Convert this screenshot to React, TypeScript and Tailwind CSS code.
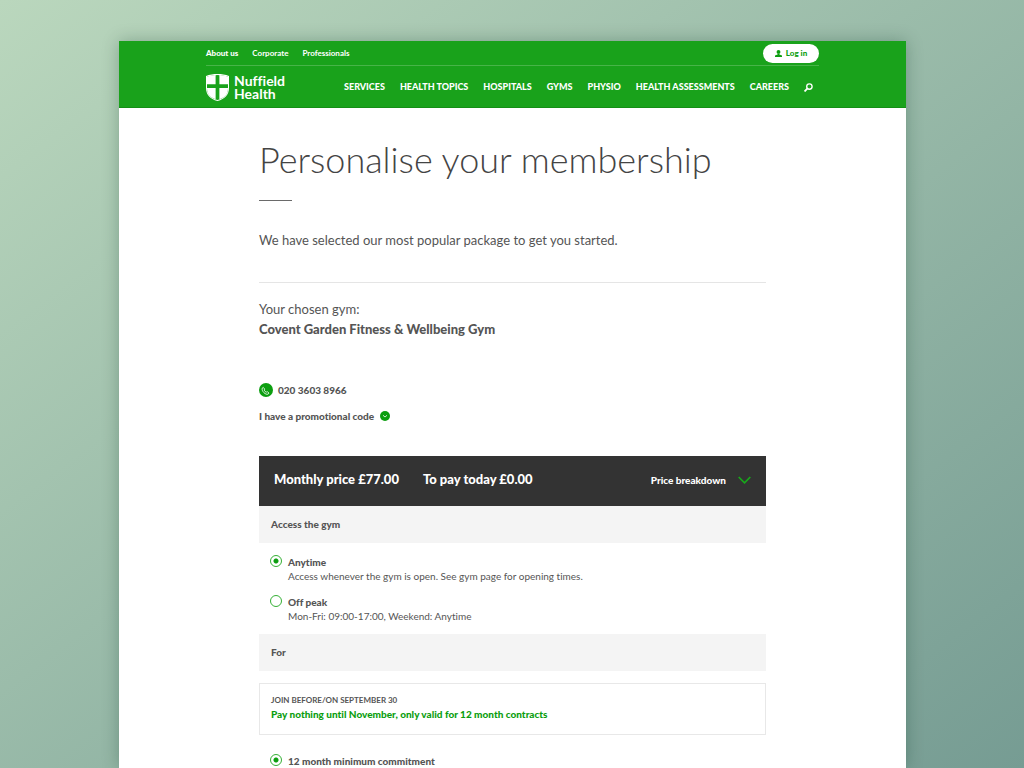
import React from "react";

const topLinks = ["Corporate", "Professionals"];
const navLinks = ["SERVICES", "HEALTH TOPICS", "HOSPITALS", "GYMS", "PHYSIO", "HEALTH ASSESSMENTS", "CAREERS"];

function Shield() {
  return (
    <svg viewBox="0 0 23 27" className="h-[27px] w-[23px]" fill="#fff" aria-hidden="true">
      <path d="M1 2.700C4 1.600 7 1.100 9.600 1V10.200H1Z" />
      <path d="M13.400 1C16 1.100 19 1.600 22 2.700v7.500h-8.600Z" />
      <path d="M1 14h8.600v11.300C4 23.300 1 20 1 14Z" />
      <path d="M22 14h-8.600v11.300C19 23.300 22 20 22 14Z" />
      <path d="M0 2V14C0 20.500 4 25 11.500 27 19 25 23 20.500 23 14V2C16-.6 7-.6 0 2ZM1 2.700C8 .5 15 .5 22 2.700V14c0 6-3.500 10-10.500 12C4.500 24 1 20 1 14Z" fillRule="evenodd" />
    </svg>
  );
}

function Radio({ id, name, title, detail, checked }: { id: string; name: string; title: string; detail?: string; checked?: boolean }) {
  return (
    <div className="flex gap-1.5">
      <input
        id={id}
        type="radio"
        name={name}
        defaultChecked={checked}
        className="m-0 size-3 shrink-0 appearance-none rounded-full border border-[#35b035] bg-white checked:bg-[radial-gradient(circle,#0c9e10_0_2px,transparent_3px)]"
      />
      <label htmlFor={id} className="block text-[10px] leading-[14px]">
        <span className="block font-black">{title}</span>
        {detail && <span className="block">{detail}</span>}
      </label>
    </div>
  );
}

export default function App() {
  return (
    <div className="min-h-screen bg-linear-to-br from-[#bad7bd] to-[#769c93] pt-[41px] pr-[118px] pl-[119px] font-['Lato',sans-serif] text-[#555] [font-variant-ligatures:none]">
      <div className="min-h-[calc(100vh-41px)] bg-white shadow-[0_0_16px_rgba(0,50,30,0.28)]">
        <header className="border-b border-[#148f16] bg-[#19a21b] px-[87px] text-white">
          <div className="flex h-[25px] items-center justify-between border-b border-white/20 text-[8px]">
            <nav aria-label="Site" className="flex gap-3.5 font-bold">
              <a href="#about" className="font-black">About us</a>
              {topLinks.map((l) => (
                <a key={l} href={"#" + l}>{l}</a>
              ))}
            </nav>
            <a href="#login" className="flex h-[19px] w-14 items-center justify-center gap-1 rounded-full bg-white font-black text-[#0c9e10]">
              <svg viewBox="0 0 8 8" className="size-[7px]" fill="currentColor" aria-hidden="true">
                <circle cx="4" cy="2.200" r="2.200" />
                <path d="M3 4h2v1l3 1.200V8H0V6.200L3 5Z" />
              </svg>
              Log in
            </a>
          </div>
          <div className="flex h-[41px] items-center justify-between pt-px">
            <a href="#home" className="flex items-center gap-[5px]">
              <Shield />
              <span className="text-[14px] leading-[13px] font-bold">
                <span className="block">Nuffield</span>
                <span className="block">Health</span>
              </span>
            </a>
            <nav aria-label="Main" className="flex items-center gap-[15px] pr-1.5 text-[9px] font-black">
              {navLinks.map((l) => (
                <a key={l} href={"#" + l} className="whitespace-nowrap">{l}</a>
              ))}
              <button type="button" aria-label="Search">
                <svg viewBox="0 0 10 10" className="size-[9px]" fill="none" stroke="currentColor" strokeWidth="1.500" aria-hidden="true">
                  <circle cx="6" cy="3.900" r="3" />
                  <path d="M3.900 6 .6 9.400" strokeWidth="2" />
                </svg>
              </button>
            </nav>
          </div>
        </header>

        <main className="px-[140px] pt-6">
          <h1 className="text-[36px] leading-[54px] font-light whitespace-nowrap text-[#444]">Personalise your membership</h1>
          <div className="mt-3.5 h-px w-[33px] bg-[#6a6a6a]" />
          <p className="mt-[29px] text-[13px] leading-5">We have selected our most popular package to get you started.</p>

          <section className="mt-8 border-t border-[#e5e5e5] pt-4">
            <p className="text-[13px] leading-5">Your chosen gym:</p>
            <h2 className="text-[13px] leading-5 font-black">Covent Garden Fitness &amp; Wellbeing Gym</h2>
            <a href="tel:02036038966" className="mt-11 flex items-center gap-[5px] text-[10px] leading-[14px] font-black">
              <svg viewBox="0 0 14 14" className="size-3.5" aria-hidden="true">
                <circle cx="7" cy="7" r="7" fill="#0c9e10" />
                <path d="M3.200 5.200 4.300 4.400 5.700 6.100 5.100 7C5.500 8 6.300 8.800 7.200 9.200L8.200 8.600 10 10 9.200 11.100C6.600 12.200 2.400 8.200 3.200 5.200Z" fill="none" stroke="#fff" strokeWidth=".8" strokeLinejoin="round" />
              </svg>
              020 3603 8966
            </a>
            <button type="button" className="mt-3 flex items-center gap-1.5 text-[10px] leading-[14px] font-black">
              I have a promotional code
              <svg viewBox="0 0 10 10" className="size-2.5" aria-hidden="true">
                <circle cx="5" cy="5" r="5" fill="#0c9e10" />
                <path d="m3 4.300 2 1.700 2-1.700" fill="none" stroke="#fff" strokeWidth=".8" />
              </svg>
            </button>
          </section>

          <section className="mt-[33px]">
            <div className="flex h-[50px] items-center bg-[#333] px-[15px] pb-0.5 font-black text-white">
              <div className="flex gap-6 text-[13px]">
                <span>Monthly price £77.00</span>
                <span>To pay today £0.00</span>
              </div>
              <button type="button" className="ml-auto flex items-center gap-3 text-[10px]">
                Price breakdown
                <svg viewBox="0 0 13 8" className="h-2 w-[13px]" fill="none" stroke="#18a81b" strokeWidth="1.700" aria-hidden="true">
                  <path d="m.7 1 5.800 5.800L12.300 1" />
                </svg>
              </button>
            </div>
            <h3 className="bg-[#f4f4f4] px-3 py-[11px] text-[10px] leading-[15px] font-black">Access the gym</h3>
            <div className="flex flex-col gap-3 px-[11px] pt-3 pb-[11px]">
              <Radio id="anytime" name="access" title="Anytime" detail="Access whenever the gym is open. See gym page for opening times." checked />
              <Radio id="offpeak" name="access" title="Off peak" detail="Mon-Fri: 09:00-17:00, Weekend: Anytime" />
            </div>
            <h3 className="bg-[#f4f4f4] px-3 py-[11px] text-[10px] leading-[15px] font-black">For</h3>
            <div className="mt-3 border border-[#e8e8e8] px-[11px] pt-2.5 pb-3">
              <p className="text-[8px] leading-3 font-bold">JOIN BEFORE/ON SEPTEMBER 30</p>
              <p className="text-[10px] leading-4 font-black text-[#0c9e10]">Pay nothing until November, only valid for 12 month contracts</p>
            </div>
            <div className="px-[11px] pt-[19px]">
              <Radio id="commit12" name="commitment" title="12 month minimum commitment" checked />
            </div>
          </section>
        </main>
      </div>
    </div>
  );
}
